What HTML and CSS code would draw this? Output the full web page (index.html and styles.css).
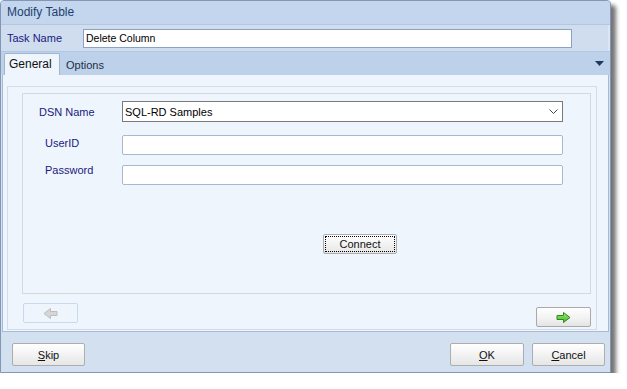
FILE: index.html
```html
<!DOCTYPE html>
<html>
<head>
<meta charset="utf-8">
<link rel="stylesheet" href="styles.css">
</head>
<body>
<div class="window">
  <div class="titlebar">Modify Table</div>
  <div class="taskrow">
    <span class="tasklabel">Task Name</span>
    <div class="taskinput">Delete Column</div>
  </div>
  <div class="tabstrip">
    <div class="tab active">General</div>
    <div class="tab">Options</div>
    <div class="tabspacer"></div>
    <svg class="tabmenu" width="9" height="5" viewBox="0 0 9 5"><path d="M0 0H9L4.5 5Z" fill="#1f3a5f"/></svg>
  </div>
  <div class="panel">
    <div class="page">
      <div class="group">
        <div class="row dsnrow">
          <span class="label">DSN Name</span>
          <div class="combo">
            <span>SQL-RD Samples</span>
            <svg width="9" height="5" viewBox="0 0 9 5"><path d="M0.5 0.5L4.5 4.5L8.5 0.5" fill="none" stroke="#444" stroke-width="1"/></svg>
          </div>
        </div>
        <div class="row userrow">
          <span class="label indent">UserID</span>
          <div class="field"></div>
        </div>
        <div class="row passrow">
          <span class="label indent">Password</span>
          <div class="field"></div>
        </div>
        <div class="connectwrap">
          <div class="btn connect"><span class="focus">Connect</span></div>
        </div>
      </div>
      <div class="navrow">
        <div class="navbtn back">
          <svg width="15" height="11" viewBox="0 0 15 11"><path d="M14 3.5H7.5V0.5L1 5.5L7.5 10.5V7.5H14Z" fill="#d6d6d6" stroke="#bdbdbd" stroke-width="1"/></svg>
        </div>
        <div class="navbtn next">
          <svg width="15" height="11" viewBox="0 0 15 11"><defs><linearGradient id="g" x1="0" y1="0" x2="0" y2="1"><stop offset="0" stop-color="#9cf07a"/><stop offset="1" stop-color="#3fb323"/></linearGradient></defs><path d="M1 3.5H7.5V0.5L14 5.5L7.5 10.5V7.5H1Z" fill="url(#g)" stroke="#2f8a1c" stroke-width="1"/></svg>
        </div>
      </div>
    </div>
  </div>
  <div class="footer">
    <div class="btn fbtn"><span><u>S</u>kip</span></div>
    <div class="spacer"></div>
    <div class="btn fbtn ok"><span><u>O</u>K</span></div>
    <div class="btn fbtn cancel"><span><u>C</u>ancel</span></div>
  </div>
</div>
</body>
</html>
```
FILE: styles.css
```css
html, body {
  margin: 0;
  padding: 0;
  background: #ffffff;
}
body {
  font-family: "Liberation Sans", Arial, sans-serif;
  font-size: 11px;
  color: #000;
}
.window {
  width: 611px;
  height: 373px;
  box-sizing: border-box;
  border: 1px solid #8197b5;
  border-radius: 4px 4px 0 0;
  background: #d3e0f0;
  box-shadow: 5px 5px 4px rgba(0, 0, 0, 0.55);
  display: flex;
  flex-direction: column;
  overflow: hidden;
}
.titlebar {
  height: 23px;
  line-height: 22px;
  padding-left: 6px;
  background: #c3d6ed;
  color: #1e3f6e;
  font-size: 12px;
  border-bottom: 1px solid #b3c7e0;
}
.taskrow {
  height: 26px;
  display: flex;
  align-items: center;
  background: #cfddef;
  padding-left: 6px;
  border-right: 2px solid #dce6f2;
  box-sizing: border-box;
}
.tasklabel {
  width: 76px;
  color: #1a1a7e;
  font-size: 11px;
}
.taskinput {
  width: 489px;
  height: 19px;
  box-sizing: border-box;
  border: 1px solid #8aa3c4;
  background: #fff;
  line-height: 17px;
  padding-left: 2px;
  font-size: 10.5px;
}
.tabstrip {
  height: 24px;
  display: flex;
  align-items: flex-end;
  background: #bdd1ea;
  border-top: 1px solid #b2c7e1;
  padding-left: 3px;
  box-sizing: border-box;
}
.tab {
  height: 21px;
  line-height: 23px;
  padding: 0 5px;
  color: #1e2e44;
  font-size: 11px;
}
.tab.active {
  width: 56px;
  box-sizing: border-box;
  height: 22px;
  line-height: 21px;
  padding: 0 4px;
  background: #eef5fd;
  border: 1px solid #9fb5d1;
  border-bottom: none;
  border-radius: 2px 2px 0 0;
  font-size: 12px;
  color: #111;
}
.tab + .tab {
  margin-left: 1px;
}
.tabspacer {
  flex: 1;
}
.tabmenu {
  align-self: center;
  margin-right: 6px;
}
.panel {
  height: 257px;
  margin: 0 1px 0 1px;
  width: 607px;
  box-sizing: border-box;
  background: #eef5fd;
  border: 1px solid #a4bad6;
  border-top: none;
  padding: 11px 11px 1px 4px;
}
.page {
  height: 100%;
  box-sizing: border-box;
  border: 1px solid #d5dce5;
  padding: 6px 5px 0 14px;
  display: flex;
  flex-direction: column;
}
.group {
  height: 201px;
  box-sizing: border-box;
  border: 1px solid #d3d9e0;
  padding: 7px 27px 0 0;
}
.row {
  display: flex;
  align-items: center;
}
.label {
  width: 83px;
  padding-left: 16px;
  color: #1a1a7e;
  font-size: 11px;
}
.label.indent {
  width: 77px;
  padding-left: 22px;
}
.combo {
  flex: 1;
  height: 21px;
  box-sizing: border-box;
  border: 1px solid #7a7a7a;
  background: #fff;
  display: flex;
  align-items: center;
  justify-content: space-between;
  padding: 0 4px 0 2px;
  font-size: 11px;
}
.field {
  flex: 1;
  height: 20px;
  box-sizing: border-box;
  border: 1px solid #a7b9cf;
  border-radius: 2px;
  background: #fff;
}
.userrow {
  margin-top: 13px;
}
.userrow .label {
  margin-top: -5px;
}
.passrow {
  margin-top: 10px;
}
.passrow .label {
  margin-top: -11px;
}
.connectwrap {
  padding-left: 300px;
  margin-top: 49px;
}
.btn {
  box-sizing: border-box;
  border: 1px solid #adadad;
  border-radius: 2px;
  background: linear-gradient(#ffffff, #f0f0f0 60%, #e6e6e6);
  display: flex;
  align-items: center;
  justify-content: center;
  font-size: 11px;
  color: #111;
}
.connect {
  width: 74px;
  height: 20px;
  padding: 1px;
}
.connect .focus {
  width: 100%;
  height: 100%;
  box-sizing: border-box;
  border: 1px dotted #000;
  display: flex;
  align-items: center;
  justify-content: center;
}
.navrow {
  display: flex;
  justify-content: space-between;
  align-items: flex-start;
  padding-left: 1px;
}
.navbtn {
  width: 55px;
  height: 20px;
  box-sizing: border-box;
  border-radius: 2px;
  display: flex;
  align-items: center;
  justify-content: center;
}
.back {
  margin-top: 9px;
  border: 1px solid #c9d8ea;
  background: #eef5fd;
}
.next {
  margin-top: 13px;
  height: 20px;
  border: 1px solid #a9a9a9;
  background: linear-gradient(#ffffff, #f1f1f1 60%, #e4e4e4);
}
.footer {
  flex: 1;
  display: flex;
  align-items: flex-start;
  padding: 11px 5px 0 11px;
}
.fbtn {
  width: 73px;
  height: 23px;
}
.spacer {
  flex: 1;
}
.ok {
  width: 74px;
  margin-right: 8px;
}
```
